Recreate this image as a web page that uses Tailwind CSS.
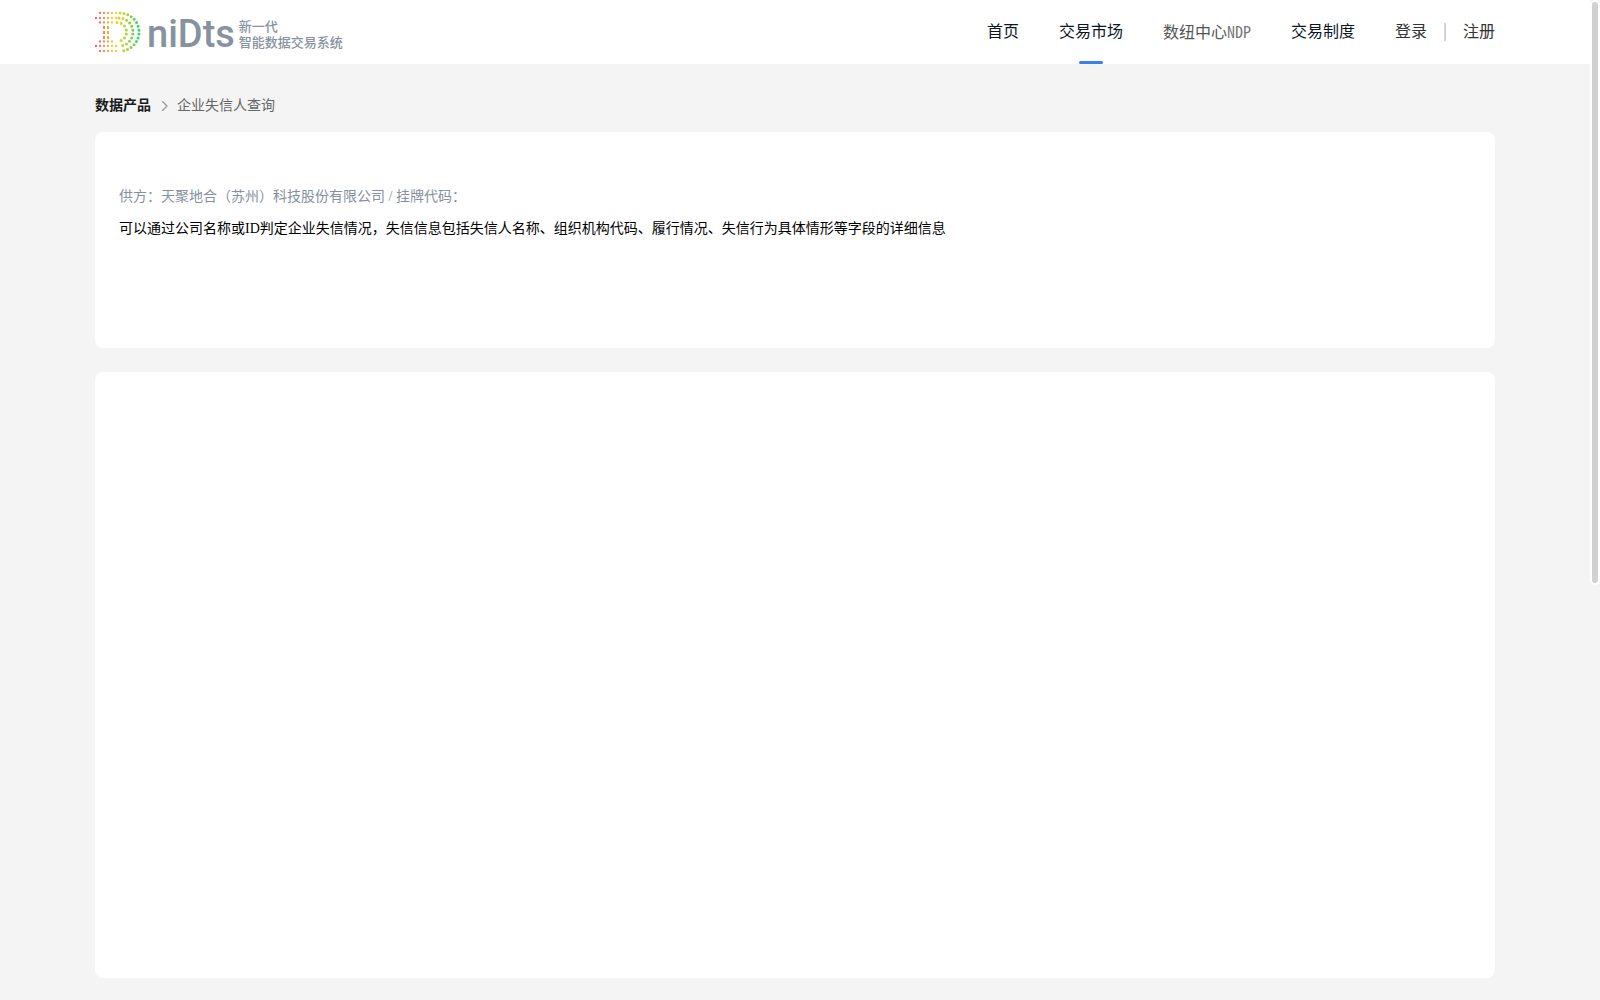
<!DOCTYPE html>
<html lang="zh-CN">
<head>
    <meta charset="UTF-8">
    <meta name="viewport" content="width=device-width, initial-scale=1.0">
    <title>企业失信人查询</title>
    <script src="https://cdn.jsdelivr.net/npm/@tailwindcss/browser@4"></script>
</head>
<body class="flex min-h-screen bg-[#f4f4f4] font-['Liberation_Serif','Noto_Sans_CJK_SC',serif]">
    <div class="flex-1">
        <header class="bg-white">
            <div class="mx-auto flex h-16 max-w-[1400px] items-center justify-between">
                <a href="#" class="flex items-center text-[#8792a0]" aria-label="niDts">
                    <svg class="h-12 w-12" viewBox="95 8 48 48" fill="none" stroke="url(#dots)" stroke-linecap="round">
                        <defs>
                            <linearGradient id="dots" gradientUnits="userSpaceOnUse" x1="95" y1="32" x2="140" y2="32">
                                <stop offset="0" stop-color="#ee4f80" />
                                <stop offset="0.2" stop-color="#f58a4e" />
                                <stop offset="0.4" stop-color="#f2cf2b" />
                                <stop offset="0.6" stop-color="#cfd62a" />
                                <stop offset="0.8" stop-color="#86d136" />
                                <stop offset="1" stop-color="#2fd573" />
                            </linearGradient>
                        </defs>
                        <g stroke-width="2.3" stroke-dasharray="0 4">
                            <path d="M100 13H117M100 51H117" />
                            <path d="M96 18H117M96 46H117" />
                            <path d="M100 22.5H114M100 41.5H114" />
                        </g>
                        <g stroke-width="3">
                            <path stroke-dasharray="0 3.97" d="M120 13a19 19 0 0 1 0 38" />
                            <path stroke-dasharray="0 3.99" d="M119 18a14 14 0 0 1 0 28" />
                            <path stroke-dasharray="0 4.25" d="M117 22.5a9.5 9.5 0 0 1 0 19" />
                        </g>
                        <path stroke-width="2" stroke-linecap="butt" stroke-dasharray="3 2" d="M104 26v13M108 26v13" />
                    </svg>
                    <span class="mt-1 ml-1 font-[Roboto,sans-serif] text-[38px] leading-10 font-medium">niDts</span>
                    <span class="mt-1 ml-1 font-['Noto_Sans_CJK_SC',sans-serif] text-[13px] leading-4 font-medium">新一代<br>智能数据交易系统</span>
                </a>
                <nav class="flex items-center gap-10 text-base text-[#0b1526]">
                    <a href="#">首页</a>
                    <a href="#" class="relative flex h-16 items-center">交易市场
                        <span class="absolute bottom-0 left-5 h-[3px] w-6 rounded-sm bg-[#3880f0]"></span>
                    </a>
                    <a href="#" class="text-[#555]">数纽中心<span class="font-['Noto_Sans_Mono_CJK_SC','Liberation_Mono',monospace] text-[#777]">NDP</span></a>
                    <a href="#">交易制度</a>
                    <div class="flex items-center gap-[17px] text-[#333]">
                        <a href="#">登录</a>
                        <span class="h-[18px] w-[2px] bg-[#d3d3d3]"></span>
                        <a href="#">注册</a>
                    </div>
                </nav>
            </div>
        </header>

        <main class="mx-auto max-w-[1400px] pt-8">
            <nav class="mb-4 flex items-center text-sm">
                <a href="#" class="font-bold text-[#1b1b1b]">数据产品</a>
                <svg class="mx-2 h-[10px] w-[10px]" viewBox="0 0 10 10" fill="none" stroke="#999" stroke-width="1.3">
                    <path d="M3 0L8 5L3 10" />
                </svg>
                <span class="text-[#666]">企业失信人查询</span>
            </nav>

            <section class="mb-6 min-h-[216px] rounded-lg bg-white px-6 pt-[55px]">
                <p class="mb-3 text-sm text-[#8490a0]">供方：天聚地合（苏州）科技股份有限公司 / 挂牌代码：</p>
                <p class="text-sm text-black">可以通过公司名称或ID判定企业失信情况，失信信息包括失信人名称、组织机构代码、履行情况、失信行为具体情形等字段的详细信息</p>
            </section>

            <section class="min-h-[606px] rounded-lg bg-white"></section>
        </main>
    </div>

    <!-- scroll track -->
    <div class="w-[10px]">
        <div class="h-[585px] rounded-full border-2 border-white bg-[#d1d1d1]"></div>
    </div>
</body>
</html>
